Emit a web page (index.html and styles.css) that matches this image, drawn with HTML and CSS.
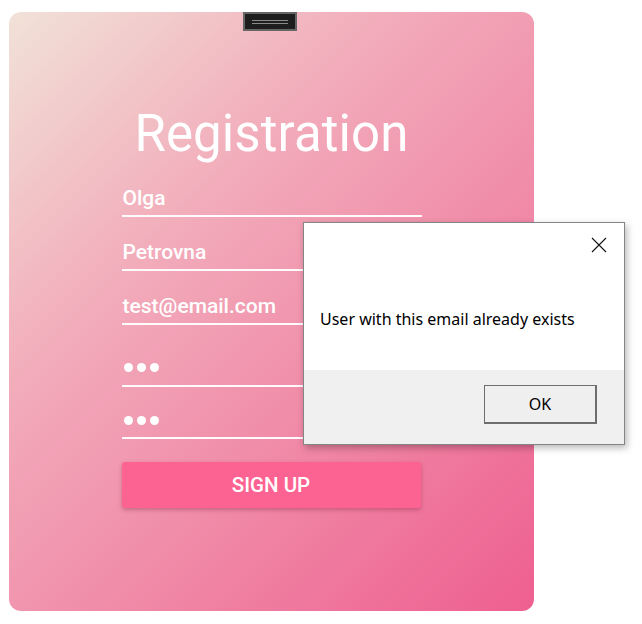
FILE: index.html
```html
<!DOCTYPE html>
<html lang="en">
<head>
<meta charset="utf-8">
<title>Registration</title>
<link rel="stylesheet" href="styles.css">
</head>
<body>
<div class="page">
  <div class="card">
    <div class="handle"><span class="handle-line"></span><span class="handle-line"></span></div>
    <h1 class="title">Registration</h1>
    <form class="form">
      <div class="field f1"><span class="value">Olga</span></div>
      <div class="field"><span class="value">Petrovna</span></div>
      <div class="field"><span class="value">test@email.com</span></div>
      <div class="field pw f4"><span class="dots"><i></i><i></i><i></i></span></div>
      <div class="field pw f5"><span class="dots"><i></i><i></i><i></i></span></div>
      <div class="btn">SIGN UP</div>
    </form>
  </div>
  <div class="dialog">
    <div class="dialog-body">
      <div class="close">
        <svg width="16" height="16" viewBox="0 0 16 16"><path d="M1 1 L15 15 M15 1 L1 15" stroke="#111" stroke-width="1.1" fill="none"/></svg>
      </div>
      <p class="msg">User with this email already exists</p>
    </div>
    <div class="dialog-foot">
      <div class="ok">OK</div>
    </div>
  </div>
</div>
</body>
</html>
```
FILE: styles.css
```css
html, body { margin: 0; padding: 0; background: #fff; }
.page { position: relative; width: 642px; height: 624px; padding: 12px 0 0 9px; box-sizing: border-box; }
.card {
  position: relative;
  width: 525px; height: 599px;
  border-radius: 12px;
  background: linear-gradient(135deg, #f1e2d8 0%, #f2adbb 33%, #ee5f90 100%);
  display: flex; flex-direction: column; align-items: center;
  font-family: Roboto, "Noto Sans", sans-serif;
  color: #fff;
}
.handle {
  position: absolute; left: 234px; top: 0;
  width: 54px; height: 19px; box-sizing: border-box;
  background: #1e1e1e; border: 2px solid #666;
  display: flex; flex-direction: column; align-items: center; justify-content: center; gap: 2px;
}
.handle-line { display: block; width: 36px; height: 1px; background: #8a8a8a; }
.title {
  margin: 92px 0 0; font-weight: 400; font-size: 51px; line-height: 60px; letter-spacing: 0.1px;
}
.form { width: 300px; margin-top: 22px; display: flex; flex-direction: column; }
.field {
  border-bottom: 2px solid rgba(255,255,255,0.95);
  padding: 0 0 5px 1px; height: 24px; line-height: 24px;
  font-size: 21px; font-weight: 500;
  margin-top: 23px;
}
.field.f1 { margin-top: 0; }
.field.f4 { margin-top: 30px; padding-bottom: 6px; }
.field.f5 { margin-top: 21px; }
.dots { display: flex; align-items: center; gap: 4px; height: 24px; padding-left: 1px; }
.dots i { display: block; width: 9px; height: 9px; border-radius: 50%; background: #fff; }
.btn {
  margin-top: 23px; height: 46px; width: 299px;
  background: #fd6392; border-radius: 3px;
  box-shadow: 0 2px 4px rgba(120,30,60,0.35);
  display: flex; align-items: center; justify-content: center;
  font-size: 20.5px; font-weight: 500; color: #fff;
}
.dialog {
  position: absolute; left: 303px; top: 222px;
  width: 322px; height: 223px; box-sizing: border-box;
  border: 1px solid #858585; background: #fff;
  box-shadow: 2px 3px 7px rgba(0,0,0,0.28);
  display: flex; flex-direction: column;
  font-family: "Noto Sans", "Open Sans", sans-serif; color: #000;
}
.dialog-body { position: relative; height: 147px; }
.close { position: absolute; right: 17px; top: 14px; width: 16px; height: 16px; }
.close svg { display: block; }
.msg { margin: 0; padding: 85px 0 0 16px; font-size: 16px; line-height: 22px; }
.dialog-foot { flex: 1; background: #f0f0f0; display: flex; justify-content: flex-end; align-items: flex-start; padding: 15px 27px 0 0; }
.ok {
  width: 113px; height: 39px; box-sizing: border-box;
  border: 1px solid #6e6e6e; border-right-width: 2px; border-bottom-width: 2px;
  background: #efefef;
  display: flex; align-items: center; justify-content: center;
  font-size: 16px;
}
```
